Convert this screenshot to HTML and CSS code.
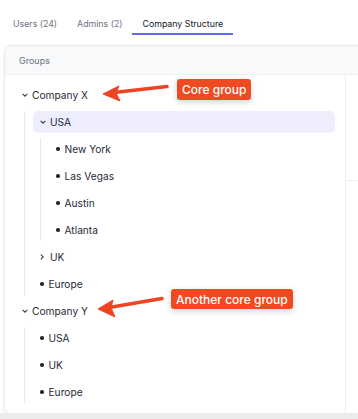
FILE: index.html
```html
<!DOCTYPE html>
<html lang="en">
<head>
    <meta charset="UTF-8">
    <meta name="viewport" content="width=device-width, initial-scale=1.0">
    <title>Company Structure</title>
    <link rel="stylesheet" href="styles.css">
</head>
<body>
 <div class="page">
    <div class="tabs">
        <div class="tab">Users (24)</div>
        <div class="tab">Admins (2)</div>
        <div class="tab active">Company Structure</div>
    </div>

    <div class="card">
        <div class="card-head">Groups</div>
        <div class="card-body">
            <div class="tree">
                <div class="node">
                    <div class="row">
                        <span class="icon"><svg width="6" height="4" viewBox="0 0 6 4"><path d="M0.6 0.8 L3 3.2 L5.4 0.8" fill="none" stroke="#374151" stroke-width="1.1"/></svg></span>
                        <span>Company X</span>
                    </div>
                    <div class="children lvl0">
                        <div class="node">
                            <div class="row selected">
                                <span class="icon"><svg width="6" height="4" viewBox="0 0 6 4"><path d="M0.6 0.8 L3 3.2 L5.4 0.8" fill="none" stroke="#374151" stroke-width="1.1"/></svg></span>
                                <span>USA</span>
                            </div>
                            <div class="children lvl1">
                                <div class="row"><span class="dot"></span><span>New York</span></div>
                                <div class="row"><span class="dot"></span><span>Las Vegas</span></div>
                                <div class="row"><span class="dot"></span><span>Austin</span></div>
                                <div class="row"><span class="dot"></span><span>Atlanta</span></div>
                            </div>
                        </div>
                        <div class="row">
                            <span class="icon"><svg width="4" height="6" viewBox="0 0 4 6"><path d="M0.8 0.6 L3.2 3 L0.8 5.4" fill="none" stroke="#374151" stroke-width="1.1"/></svg></span>
                            <span>UK</span>
                        </div>
                        <div class="row"><span class="dot"></span><span>Europe</span></div>
                    </div>
                </div>

                <div class="node">
                    <div class="row">
                        <span class="icon"><svg width="6" height="4" viewBox="0 0 6 4"><path d="M0.6 0.8 L3 3.2 L5.4 0.8" fill="none" stroke="#374151" stroke-width="1.1"/></svg></span>
                        <span>Company Y</span>
                    </div>
                    <div class="children lvl0">
                        <div class="row"><span class="dot"></span><span>USA</span></div>
                        <div class="row"><span class="dot"></span><span>UK</span></div>
                        <div class="row"><span class="dot"></span><span>Europe</span></div>
                    </div>
                </div>
            </div>
            <div class="side">
                <div class="side-box"></div>
            </div>
        </div>
    </div>

    <!-- annotations drawn over the screenshot -->
    <svg class="arrows" width="358" height="419" viewBox="0 0 358 419">
        <path d="M167 86.5 L114 92.5" stroke="#ef4423" stroke-width="3.6" stroke-linecap="round" fill="none"/>
        <path d="M103 94 L119 86 L116 93 L120 101 Z" fill="#ef4423" stroke="#ef4423" stroke-width="1" stroke-linejoin="round"/>
        <path d="M162 298.5 L109 307.5" stroke="#ef4423" stroke-width="3.6" stroke-linecap="round" fill="none"/>
        <path d="M98 309 L113 300 L111 307.5 L115 317 Z" fill="#ef4423" stroke="#ef4423" stroke-width="1" stroke-linejoin="round"/>
    </svg>
    <div class="badge badge-core">Core group</div>
    <div class="badge badge-other">Another core group</div>
 </div>
</body>
</html>
```

FILE: styles.css
```css
body {
    margin: 0;
    background-color: #ececec;
    font-family: Inter, "Noto Sans", sans-serif;
    overflow: hidden;
}

.page {
    position: relative;
    height: 413px;
    background-color: white;
    overflow: hidden;
}

.tabs {
    display: flex;
    padding-left: 3px;
}

.tab {
    padding: 17px 10px 2px;
    line-height: 14px;
    font-size: 8.8px;
    color: #6b7280;
    border-bottom: 2px solid transparent;
}

.tab.active {
    color: #111827;
    border-bottom-color: #6366f1;
}

.card {
    margin: 10px 0 0 4px;
    width: 400px;
    height: 367px;
    border: 1px solid #e8eaee;
    border-radius: 7px;
    background-color: white;
    box-shadow: 0 2px 4px rgba(0, 0, 0, 0.06);
    overflow: hidden;
}

.card-head {
    height: 28px;
    padding-left: 14px;
    display: flex;
    align-items: center;
    background-color: #f8f9fb;
    border-bottom: 1px solid #f0f1f4;
    font-size: 9px;
    color: #6b7280;
}

.card-body {
    display: flex;
    height: 338px;
}

.tree {
    width: 330px;
    padding: 4px 10px 0 0;
    font-size: 10.2px;
    color: #1f2937;
}

.row {
    display: flex;
    align-items: center;
    height: 22px;
    margin-top: 5px;
    padding-left: 7px;
    border-radius: 5px;
}

.tree > .node > .row {
    margin-left: 10px;
}

.row.selected {
    background-color: #eeedfd;
}

.icon {
    width: 10px;
    display: flex;
    align-items: center;
}

.dot {
    width: 3.5px;
    height: 3.5px;
    margin: 0 5px 0 0;
    border-radius: 50%;
    background-color: #1f2937;
}

.children {
    border-left: 1px solid #e5e7eb;
}

.children.lvl0 {
    margin-left: 19px;
    padding-left: 8px;
}

.children.lvl1 {
    margin-left: 7px;
    padding-left: 8px;
}

.side {
    flex: 1;
    border-left: 1px solid #eeeff2;
}

.side-box {
    height: 105px;
    border-bottom: 1px solid #eeeff2;
}

.arrows {
    position: absolute;
    top: 0;
    left: 0;
    pointer-events: none;
}

.badge {
    position: absolute;
    height: 21px;
    padding: 0 5px;
    display: flex;
    align-items: center;
    border-radius: 3px;
    background-color: #f04a23;
    color: white;
    font-size: 12px;
    font-weight: 500;
    box-shadow: 0 2px 6px rgba(0, 0, 0, 0.18);
}

.badge-core {
    left: 177px;
    top: 79px;
}

.badge-other {
    left: 171px;
    top: 289px;
    height: 20px;
}
```
